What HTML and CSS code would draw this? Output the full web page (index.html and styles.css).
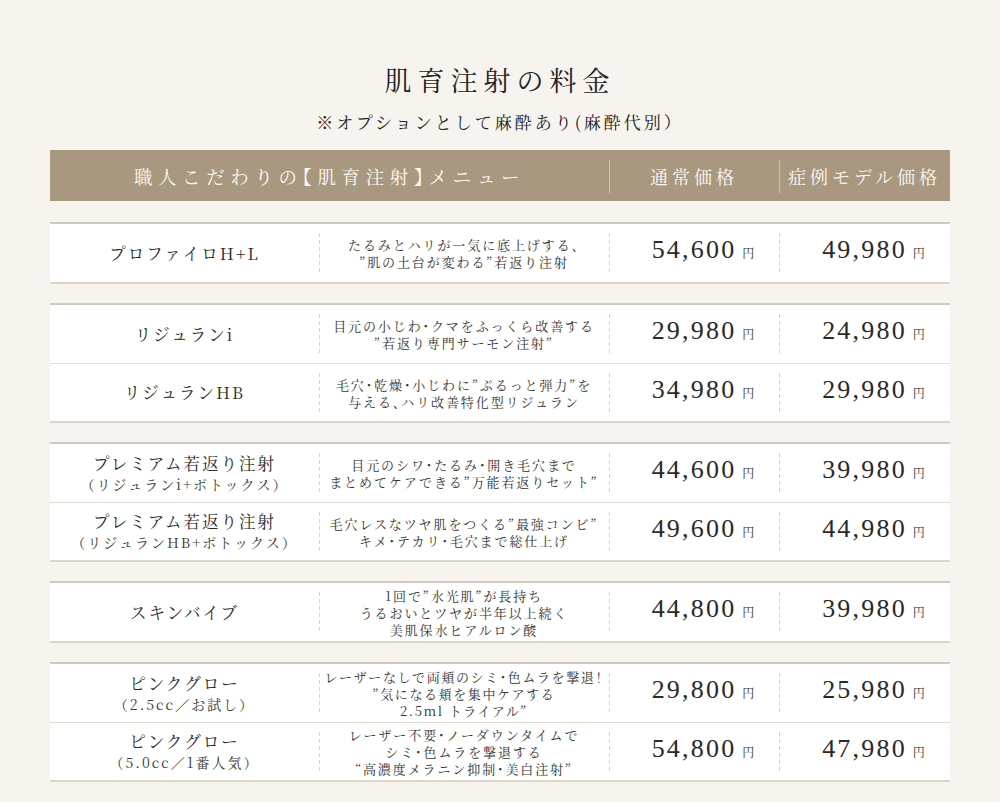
FILE: index.html
```html
<!DOCTYPE html>
<html lang="ja">
<head>
<meta charset="utf-8">
<title>肌育注射の料金</title>
<link rel="stylesheet" href="styles.css">
</head>
<body>
<main class="page">
  <h1 class="title">肌育注射の料金</h1>
  <p class="note">※オプションとして麻酔あり(麻酔代別）</p>

  <div class="table">
    <div class="thead">
      <div class="th th-menu">職人こだわりの【肌育注射】メニュー</div>
      <div class="th th-div">通常価格</div>
      <div class="th th-div">症例モデル価格</div>
    </div>

    <div class="group">
      <div class="row">
        <div class="cell name"><span class="name-main">プロファイロH+L</span></div>
        <div class="cell desc dash">たるみとハリが一気に底上げする、<br>”肌の土台が変わる”若返り注射</div>
        <div class="cell price dash">54,600<span class="yen">円</span></div>
        <div class="cell price dash">49,980<span class="yen">円</span></div>
      </div>
    </div>

    <div class="group">
      <div class="row">
        <div class="cell name"><span class="name-main">リジュランi</span></div>
        <div class="cell desc dash">目元の小じわ・クマをふっくら改善する<br>”若返り専門サーモン注射”</div>
        <div class="cell price dash">29,980<span class="yen">円</span></div>
        <div class="cell price dash">24,980<span class="yen">円</span></div>
      </div>
      <div class="row">
        <div class="cell name"><span class="name-main">リジュランHB</span></div>
        <div class="cell desc dash">毛穴・乾燥・小じわに”ぷるっと弾力”を<br>与える、ハリ改善特化型リジュラン</div>
        <div class="cell price dash">34,980<span class="yen">円</span></div>
        <div class="cell price dash">29,980<span class="yen">円</span></div>
      </div>
    </div>

    <div class="group">
      <div class="row">
        <div class="cell name"><span class="name-main">プレミアム若返り注射</span><span class="name-sub">（リジュランi+ボトックス）</span></div>
        <div class="cell desc dash">目元のシワ・たるみ・開き毛穴まで<br>まとめてケアできる”万能若返りセット”</div>
        <div class="cell price dash">44,600<span class="yen">円</span></div>
        <div class="cell price dash">39,980<span class="yen">円</span></div>
      </div>
      <div class="row">
        <div class="cell name"><span class="name-main">プレミアム若返り注射</span><span class="name-sub">（リジュランHB+ボトックス）</span></div>
        <div class="cell desc dash">毛穴レスなツヤ肌をつくる”最強コンビ”<br>キメ・テカリ・毛穴まで総仕上げ</div>
        <div class="cell price dash">49,600<span class="yen">円</span></div>
        <div class="cell price dash">44,980<span class="yen">円</span></div>
      </div>
    </div>

    <div class="group">
      <div class="row">
        <div class="cell name"><span class="name-main">スキンバイブ</span></div>
        <div class="cell desc dash">1回で”水光肌”が長持ち<br>うるおいとツヤが半年以上続く<br>美肌保水ヒアルロン酸</div>
        <div class="cell price dash">44,800<span class="yen">円</span></div>
        <div class="cell price dash">39,980<span class="yen">円</span></div>
      </div>
    </div>

    <div class="group">
      <div class="row">
        <div class="cell name"><span class="name-main">ピンクグロー</span><span class="name-sub">（2.5cc／お試し）</span></div>
        <div class="cell desc desc-tight dash">レーザーなしで両頬のシミ・色ムラを撃退！<br>”気になる頬を集中ケアする<br>2.5ml トライアル”</div>
        <div class="cell price dash">29,800<span class="yen">円</span></div>
        <div class="cell price dash">25,980<span class="yen">円</span></div>
      </div>
      <div class="row">
        <div class="cell name"><span class="name-main">ピンクグロー</span><span class="name-sub">（5.0cc／1番人気）</span></div>
        <div class="cell desc dash">レーザー不要・ノーダウンタイムで<br>シミ・色ムラを撃退する<br>“高濃度メラニン抑制・美白注射”</div>
        <div class="cell price dash">54,800<span class="yen">円</span></div>
        <div class="cell price dash">47,980<span class="yen">円</span></div>
      </div>
    </div>
  </div>
</main>
</body>
</html>
```

FILE: styles.css
```css
* { box-sizing: border-box; }

html, body {
  margin: 0;
  padding: 0;
  background: #f7f4ef;
}

body {
  font-family: "Noto Serif CJK JP", "Liberation Serif", "Noto Sans CJK JP", serif;
  color: #2b2b2b;
}

.page {
  width: 900px;
  margin: 0 auto;
  padding-top: 62px;
}

.title {
  margin: 0;
  text-align: center;
  font-size: 27px;
  line-height: 35px;
  font-weight: 400;
  letter-spacing: 6px;
  color: #222;
}

.note {
  margin: 13px 0 16px;
  text-align: center;
  font-size: 17px;
  line-height: 24px;
  letter-spacing: 3px;
  color: #222;
}

.table {
  display: flex;
  flex-direction: column;
  gap: 19px;
}

.thead {
  display: grid;
  grid-template-columns: 559px 170px 171px;
  height: 51px;
  background: #a89880;
  margin-bottom: 2px;
}

.th {
  display: flex;
  align-items: center;
  justify-content: center;
  color: #fbf8f2;
  font-size: 18px;
  letter-spacing: 4px;
}

.th-menu {
  font-feature-settings: "halt";
  font-size: 18.5px;
  letter-spacing: 5.6px;
}

.th-div {
  background-image: linear-gradient(#cfc4b0, #cfc4b0);
  background-repeat: no-repeat;
  background-size: 1px 33px;
  background-position: left 10px;
}

.group {
  background: #fff;
  border-top: 2px solid #d3c9bb;
  border-bottom: 2px solid #ddd4c8;
}

.row {
  display: grid;
  grid-template-columns: 269px 290px 170px 171px;
  height: 58px;
}

.row + .row {
  border-top: 1px solid #e4ddd2;
}

.cell {
  display: flex;
  flex-direction: column;
  align-items: center;
  justify-content: center;
  text-align: center;
}

.dash {
  background-image: repeating-linear-gradient(to bottom, #d9d3ca 0 4px, transparent 4px 7px);
  background-repeat: no-repeat;
  background-size: 1px calc(100% - 18px);
  background-position: left center;
}

.name-main {
  font-size: 16.5px;
  line-height: 21px;
  letter-spacing: 2px;
  color: #2b2b2b;
}

.name-sub {
  font-size: 14px;
  line-height: 20px;
  letter-spacing: 2px;
  color: #3a3a3a;
}

.desc {
  font-size: 13px;
  line-height: 17px;
  letter-spacing: 1.9px;
  color: #333;
  white-space: nowrap;
  font-feature-settings: "halt";
}

.desc-tight {
  letter-spacing: 1.6px;
}

.price {
  flex-direction: row;
  align-items: baseline;
  padding-left: 18px;
  padding-top: 6px;
  font-family: "Liberation Serif", "Noto Serif CJK JP", serif;
  font-size: 26px;
  letter-spacing: 2.2px;
  color: #2a2a2a;
  line-height: 40px;
}

.yen {
  font-family: "Noto Serif CJK JP", serif;
  font-size: 12px;
  letter-spacing: 0;
  margin-left: 6px;
  color: #333;
}
```
